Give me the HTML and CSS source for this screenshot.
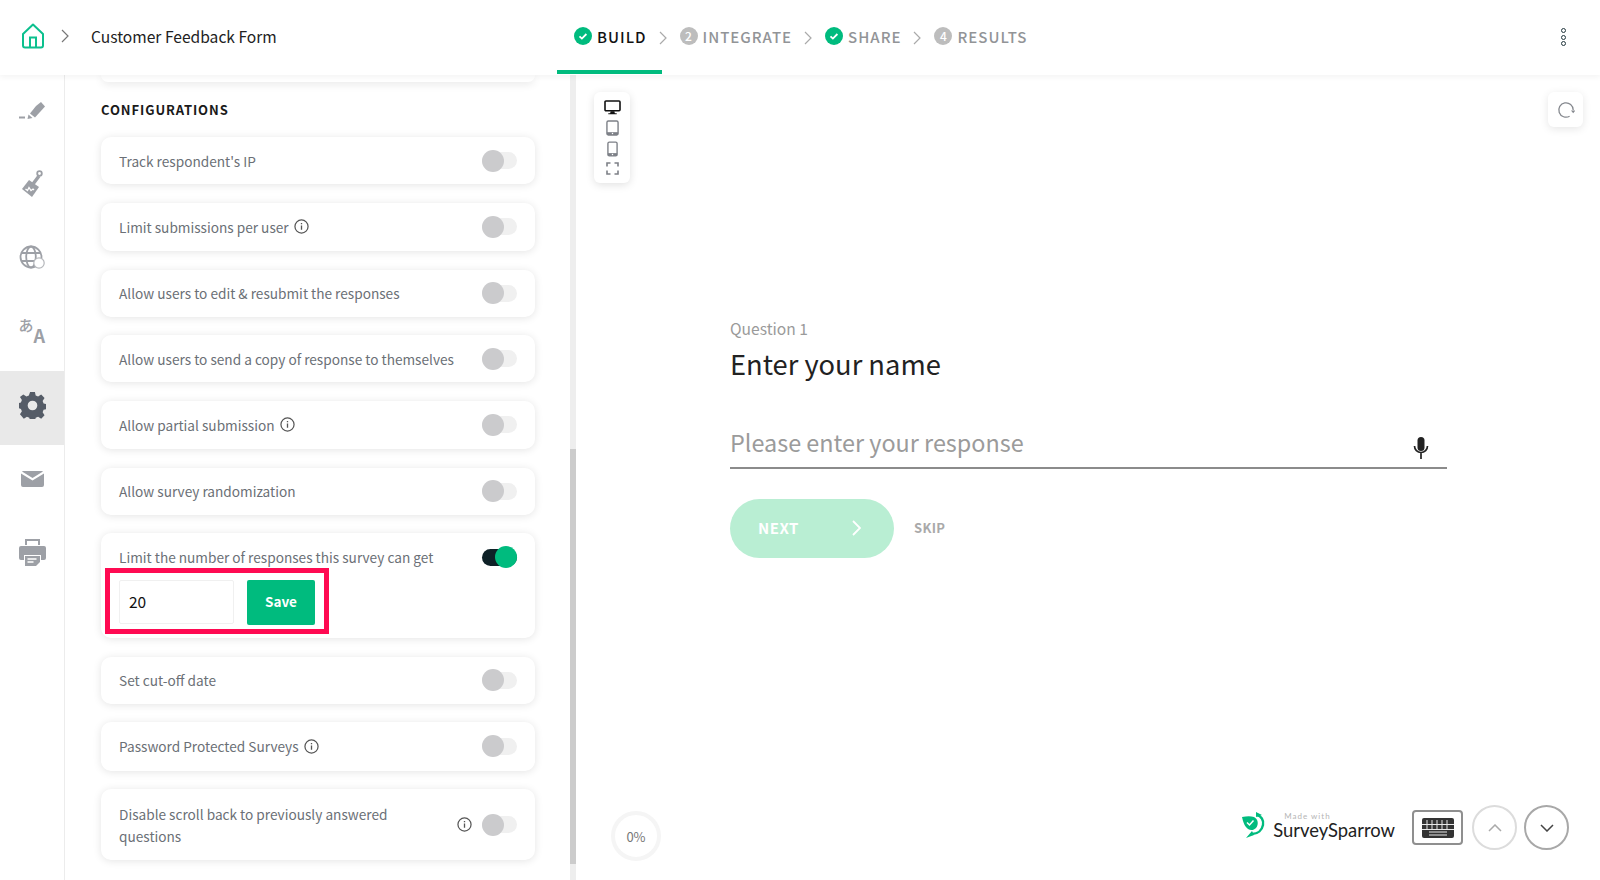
FILE: index.html
```html
<!DOCTYPE html>
<html lang="en">
<head>
<meta charset="utf-8">
<title>Customer Feedback Form</title>
<link rel="stylesheet" href="styles.css">
</head>
<body>
<header class="topbar">
  <div class="crumbs">
    <svg class="home" viewBox="0 0 24 26" width="24" height="26"><path d="M2 11 12 1.500 22 11v11.500a2 2 0 0 1-2 2H4a2 2 0 0 1-2-2z" fill="none" stroke="#0cc08e" stroke-width="2" stroke-linejoin="round"/><path d="M9 24.500V14.500h6v10" fill="none" stroke="#0cc08e" stroke-width="2"/></svg>
    <svg class="chev crumb-chev" viewBox="0 0 8 14" width="8" height="14"><path d="M1 1l6 6-6 6" fill="none" stroke="#777" stroke-width="1.200"/></svg>
    <span class="form-name">Customer Feedback Form</span>
  </div>
  <nav class="steps">
    <div class="step active"><svg class="badge" viewBox="0 0 18 18" width="18" height="18"><circle cx="9" cy="9" r="9" fill="#00bb7e"/><path d="M5.500 9.300l2.400 2.300 4.500-4.600" fill="none" stroke="#fff" stroke-width="1.800"/></svg><span>BUILD</span></div>
    <svg class="chev" viewBox="0 0 8 14" width="8" height="14"><path d="M1 1l6 6-6 6" fill="none" stroke="#aaa" stroke-width="1.200"/></svg>
    <div class="step"><span class="num">2</span><span>INTEGRATE</span></div>
    <svg class="chev" viewBox="0 0 8 14" width="8" height="14"><path d="M1 1l6 6-6 6" fill="none" stroke="#aaa" stroke-width="1.200"/></svg>
    <div class="step"><svg class="badge" viewBox="0 0 18 18" width="18" height="18"><circle cx="9" cy="9" r="9" fill="#00bb7e"/><path d="M5.500 9.300l2.400 2.300 4.500-4.600" fill="none" stroke="#fff" stroke-width="1.800"/></svg><span>SHARE</span></div>
    <svg class="chev" viewBox="0 0 8 14" width="8" height="14"><path d="M1 1l6 6-6 6" fill="none" stroke="#aaa" stroke-width="1.200"/></svg>
    <div class="step"><span class="num">4</span><span>RESULTS</span></div>
  </nav>
  <div class="kebab"><i></i><i></i><i></i></div>
</header>

<main class="layout">
  <aside class="rail">
    <div class="rail-item high"><svg viewBox="0 0 26 18" width="26" height="18"><path d="M17 4 22 0l4 4.500-10 11-5-4z" fill="#9da0a6" transform="translate(0 1)"/><path d="M9.500 13.500l4 3.500-5 1z" fill="#9da0a6"/><rect x="0" y="15.500" width="6" height="2" fill="#9da0a6"/></svg></div>
    <div class="rail-item high"><svg viewBox="0 0 22 27" width="22" height="27"><path d="M8 10 1 19l10 8 7-10z" fill="#9da0a6"/><path d="M4.500 19l2 1.500 1.500-3 2 3 2-1.500 1 1" fill="none" stroke="#fff" stroke-width="1.300"/><path d="M12 14 18 6" stroke="#9da0a6" stroke-width="3.500"/><circle cx="18.500" cy="3.500" r="2.300" fill="none" stroke="#9da0a6" stroke-width="1.800"/></svg></div>
    <div class="rail-item high"><svg viewBox="0 0 26 24" width="26" height="24"><g fill="none" stroke="#9da0a6" stroke-width="1.800"><circle cx="12" cy="12" r="10.500"/><ellipse cx="12" cy="12" rx="4.800" ry="10.500"/><path d="M2 8h20M2 16h20"/></g><circle cx="20" cy="18" r="5.200" fill="#fff" stroke="#b5b7bb" stroke-width="1.200"/></svg></div>
    <div class="rail-item high"><div class="lang"><span class="lang-a">あ</span><span class="lang-b">A</span></div></div>
    <div class="rail-item current"><svg viewBox="0 0 28 28" width="27" height="27"><path fill="#555c67" d="M11.500 0h5l.8 3.700 2.500 1 3.200-2 3.500 3.500-2 3.200 1 2.500 3.500.8v5l-3.500.8-1 2.500 2 3.200-3.500 3.500-3.200-2-2.500 1-.8 3.700h-5l-.8-3.700-2.500-1-3.200 2L1 23.200l2-3.200-1-2.500-3-.8v-5l3-.8 1-2.500-2-3.200L4.500 2.700l3.200 2 2.500-1zM14 9a5 5 0 1 0 0 10 5 5 0 0 0 0-10z"/></svg></div>
    <div class="rail-item"><svg viewBox="0 0 23 16" width="23" height="16"><path fill="#9da0a6" d="M2 0h19a2 2 0 0 1 1 .4L11.500 7 1 .4A2 2 0 0 1 2 0zM0 2.500l11.500 7 11.500-7V14a2 2 0 0 1-2 2H2a2 2 0 0 1-2-2z"/></svg></div>
    <div class="rail-item"><svg viewBox="0 0 27 27" width="27" height="27"><path fill="#9da0a6" d="M6 0h15v6h-2V2H8v4H6z"/><path fill="#9da0a6" d="M2 7h23a2 2 0 0 1 2 2v10a2 2 0 0 1-2 2h-3v-5H5v5H2a2 2 0 0 1-2-2V9a2 2 0 0 1 2-2z"/><path fill="#9da0a6" d="M6 17h15v6l-4 4H6z"/><path d="M8.500 20h9M8.500 23h6" stroke="#fff" stroke-width="1.300"/></svg></div>
  </aside>

  <section class="panel">
    <div class="settings">
      <div class="stub"></div>
      <h2 class="section-title">CONFIGURATIONS</h2>
      <div class="row"><span class="label">Track respondent's IP</span><span class="toggle"></span></div>
      <div class="row tall"><span class="label">Limit submissions per user <svg class="info" viewBox="0 0 16 16" width="15" height="15"><circle cx="8" cy="8" r="7" fill="none" stroke="#555" stroke-width="1.300"/><path d="M8 7v4.500M8 4.300v1.400" stroke="#555" stroke-width="1.400"/></svg></span><span class="toggle"></span></div>
      <div class="row"><span class="label">Allow users to edit &amp; resubmit the responses</span><span class="toggle"></span></div>
      <div class="row"><span class="label">Allow users to send a copy of response to themselves</span><span class="toggle"></span></div>
      <div class="row tall"><span class="label">Allow partial submission <svg class="info" viewBox="0 0 16 16" width="15" height="15"><circle cx="8" cy="8" r="7" fill="none" stroke="#555" stroke-width="1.300"/><path d="M8 7v4.500M8 4.300v1.400" stroke="#555" stroke-width="1.400"/></svg></span><span class="toggle"></span></div>
      <div class="row"><span class="label">Allow survey randomization</span><span class="toggle"></span></div>
      <div class="row-open">
        <div class="open-head"><span class="label">Limit the number of responses this survey can get</span><span class="toggle on"></span></div>
        <div class="limit-form">
          <div class="limit-input">20</div>
          <button class="save">Save</button>
          <span class="highlight"></span>
        </div>
      </div>
      <div class="row"><span class="label">Set cut-off date</span><span class="toggle"></span></div>
      <div class="row tall"><span class="label">Password Protected Surveys <svg class="info" viewBox="0 0 16 16" width="15" height="15"><circle cx="8" cy="8" r="7" fill="none" stroke="#555" stroke-width="1.300"/><path d="M8 7v4.500M8 4.300v1.400" stroke="#555" stroke-width="1.400"/></svg></span><span class="toggle"></span></div>
      <div class="row double"><span class="label wrap">Disable scroll back to previously answered questions</span><svg class="info side" viewBox="0 0 16 16" width="15" height="15"><circle cx="8" cy="8" r="7" fill="none" stroke="#555" stroke-width="1.300"/><path d="M8 7v4.500M8 4.300v1.400" stroke="#555" stroke-width="1.400"/></svg><span class="toggle"></span></div>
    </div>
    <div class="scrollbar"><div class="thumb"></div></div>
  </section>

  <section class="preview">
    <div class="preview-top">
      <div class="devices">
        <svg viewBox="0 0 18 16" width="17" height="15"><rect x="1" y="1" width="16" height="10.500" rx="1" fill="none" stroke="#111" stroke-width="1.700"/><path d="M7 12h4l.5 2h2v1.200h-9V14h2z" fill="#111"/></svg>
        <svg viewBox="0 0 14 17" width="13" height="16"><rect x="1" y="1" width="12" height="15" rx="1.500" fill="none" stroke="#7d8087" stroke-width="1.500"/><rect x="1" y="13" width="12" height="3" fill="#7d8087"/><circle cx="7" cy="14.500" r=".8" fill="#fff"/></svg>
        <svg viewBox="0 0 12 17" width="11" height="16"><rect x="1" y="1" width="10" height="15" rx="1.500" fill="none" stroke="#7d8087" stroke-width="1.500"/><rect x="1" y="13" width="10" height="3" fill="#7d8087"/><circle cx="6" cy="14.500" r=".8" fill="#fff"/></svg>
        <svg viewBox="0 0 13 13" width="13" height="13"><path d="M1 4.500V1h3.500M8.500 1H12v3.500M12 8.500V12H8.500M4.500 12H1V8.500" fill="none" stroke="#7d8087" stroke-width="1.600"/></svg>
      </div>
      <div class="reload"><svg viewBox="0 0 20 20" width="18" height="18"><path d="M14 16.900A8 8 0 1 1 18 10" fill="none" stroke="#85888e" stroke-width="1.400"/><path d="M15.500 10.500h5l-2.500 3z" fill="#85888e"/></svg></div>
    </div>
    <div class="question">
      <div class="q-num">Question 1</div>
      <h1 class="q-title">Enter your name</h1>
      <div class="answer">
        <span class="placeholder">Please enter your response</span>
        <svg class="mic" viewBox="0 0 16 24" width="16" height="24"><rect x="4.500" y="1" width="7" height="14" rx="3.500" fill="#222"/><path d="M1.500 10a6.500 6.500 0 0 0 13 0M8 16.500V23" fill="none" stroke="#222" stroke-width="1.700"/></svg>
      </div>
      <div class="actions">
        <div class="next"><span>NEXT</span><svg viewBox="0 0 9 16" width="9" height="16"><path d="M1 1l7 7-7 7" fill="none" stroke="#fff" stroke-width="1.800"/></svg></div>
        <span class="skip">SKIP</span>
      </div>
    </div>
    <div class="preview-foot">
      <div class="progress">0%</div>
      <div class="brand">
        <svg class="leaf" viewBox="0 0 24 27" width="24" height="27"><path d="M0 5c5-1 9-1 12 0 4 2 5 7 2 11-2 2-5 3-8 1C3 15 1 10 0 5z" fill="#00bb7e"/><path d="M5 10.500l2.500 2.500 4-4.500" fill="none" stroke="#fff" stroke-width="1.500"/><path d="M15 3c4 1 7 5 6 10s-5 9-11 9" fill="none" stroke="#00bb7e" stroke-width="2.400"/><path d="M14 0l6 3-6 2zM10 19l-6 7 8-3z" fill="#00bb7e"/></svg>
        <div class="brand-text"><small>Made with</small><b>SurveySparrow</b></div>
      </div>
      <div class="keys"><svg viewBox="0 0 32 20" width="32" height="20"><rect width="32" height="20" rx="2" fill="#333"/><path d="M0 6.500h32M0 11.500h32M7 14h18M7 17h18" stroke="#e8e8e8" stroke-width="1"/><path d="M5 2v9M10 2v9M15 2v9M20 2v9M25 2v9" stroke="#e8e8e8" stroke-width="1"/></svg></div>
      <div class="round up"><svg viewBox="0 0 14 8" width="14" height="8"><path d="M1 7l6-6 6 6" fill="none" stroke="#aaa" stroke-width="1.500"/></svg></div>
      <div class="round down"><svg viewBox="0 0 14 8" width="14" height="8"><path d="M1 1l6 6 6-6" fill="none" stroke="#444" stroke-width="1.500"/></svg></div>
    </div>
  </section>
</main>
</body>
</html>
```
FILE: styles.css
```css
* { box-sizing: border-box; }
html, body { margin: 0; height: 100%; }
body {
  width: 1600px; height: 880px; overflow: hidden; background: #fff;
  font-family: "Noto Sans CJK SC", "Noto Sans", sans-serif; color: #222;
  display: flex; flex-direction: column;
}
svg { display: block; flex: none; }

.topbar {
  height: 75px; flex: none; display: flex; align-items: center; background: #fff;
  position: relative; z-index: 3; box-shadow: 0 2px 6px rgba(0,0,0,.05);
}
.crumbs { width: 574px; flex: none; display: flex; align-items: center; padding-left: 21px; padding-bottom: 3px; }
.crumb-chev { margin-left: 16px; }
.form-name { margin-left: 22px; font-size: 15.600px; line-height: 24px; color: #222; }
.steps { display: flex; align-items: center; }
.step { display: flex; align-items: center; gap: 5px; position: relative; height: 75px; padding-bottom: 3px; font-size: 15px; font-weight: 500; letter-spacing: 1px; color: #929497; }
.step.active { color: #111; }
.step.active::after { content: ""; position: absolute; left: -17px; right: -15px; bottom: 1px; height: 4px; background: #00bb7e; }
.steps > .chev { margin: 0 13px 0 12px; }
.num { width: 18px; height: 18px; border-radius: 50%; background: #bdbdbd; color: #fff; font-size: 12px; line-height: 18px; text-align: center; letter-spacing: 0; }
.kebab { margin-left: auto; margin-right: 34px; display: flex; flex-direction: column; gap: 1.500px; margin-bottom: 1px; }
.kebab i { width: 5px; height: 5px; border-radius: 50%; border: 1.500px solid #24383f; display: block; }

.layout { flex: 1; display: flex; min-height: 0; }
.rail { width: 65px; flex: none; border-right: 1px solid #ececec; padding-top: 2px; }
.rail-item { height: 73.500px; display: flex; align-items: center; justify-content: center; padding-bottom: 4px; }
.rail-item.high { padding-bottom: 8px; }
.rail-item.current { background: #e9e9e9; padding-bottom: 5px; }
.lang { width: 27px; height: 26px; display: flex; align-items: flex-start; color: #9da0a6; }
.lang-a { font-size: 15px; line-height: 15px; font-weight: 500; }
.lang-b { font-size: 18px; line-height: 18px; font-weight: 700; margin-top: 9px; }

.panel { width: 511px; flex: none; display: flex; background: #fff; }
.settings { width: 505px; flex: none; padding: 0 35px 0 36px; }
.stub { height: 7px; background: #fff; border-radius: 0 0 10px 10px; box-shadow: 0 2px 8px rgba(0,0,0,.1); }
.section-title { margin: 19px 0 18px; font-size: 13px; line-height: 18px; font-weight: 700; letter-spacing: .9px; color: #1a1a1a; }
.row, .row-open { background: #fff; border-radius: 10px; box-shadow: 0 1px 8px rgba(0,0,0,.11); margin-bottom: 18.500px; }
.row { height: 47px; display: flex; align-items: center; padding: 0 18px; }
.row.tall { height: 48.500px; }
.row.double { height: 71px; }
.row-open { height: 105px; padding: 12px 18px 0; position: relative; }
.open-head { display: flex; align-items: center; justify-content: space-between; height: 24px; }
.label { font-size: 13.650px; line-height: 22px; color: #6b7076; display: flex; align-items: center; gap: 5px; flex: 1; white-space: nowrap; }
.label.wrap { white-space: normal; display: block; padding-right: 20px; }
.info.side { margin-right: 10px; }
.toggle { width: 35px; height: 17px; background: #f0f0f0; border-radius: 9px; position: relative; flex: none; }
.toggle::after { content: ""; position: absolute; left: 0; top: -2.500px; width: 22px; height: 22px; border-radius: 50%; background: #cbcbcd; }
.toggle.on { background: #0e2127; }
.toggle.on::after { left: 13px; background: #00bb7e; }

.limit-form { display: flex; gap: 13px; margin-top: 11px; position: relative; }
.limit-input { width: 115px; height: 44px; border: 1px solid #f0f0f0; border-radius: 2px; padding-left: 9px; font-size: 15.500px; line-height: 40px; color: #111; }
.save { width: 68px; height: 45px; border: 0; background: #00bb7e; border-radius: 2px; color: #fff; font: 600 13.500px/43px "Noto Sans CJK SC", "Noto Sans", sans-serif; padding: 0 0 2px; }
.highlight { position: absolute; left: -14px; top: -12px; width: 224px; height: 66px; border: 5px solid #ff0a52; }

.scrollbar { width: 6px; background: #eeeeee; flex: none; display: flex; flex-direction: column; justify-content: flex-end; padding-bottom: 16px; }
.thumb { height: 415px; background: #cccccc; }

.preview { flex: 1; display: flex; flex-direction: column; min-width: 0; }
.preview-top { display: flex; justify-content: space-between; align-items: flex-start; padding: 17px 17px 0 18px; height: 241px; flex: none; }
.devices { width: 36px; height: 91px; background: #fff; border-radius: 6px; box-shadow: 0 2px 8px rgba(0,0,0,.12); display: flex; flex-direction: column; align-items: center; justify-content: space-between; padding: 8px 0 8px; }
.reload { width: 35px; height: 35px; background: #fff; border-radius: 6px; box-shadow: 0 2px 8px rgba(0,0,0,.1); display: flex; align-items: center; justify-content: center; }
.question { margin-left: 154px; width: 717px; flex: none; }
.q-num { font-size: 15.600px; line-height: 24px; color: #9a9a9a; }
.q-title { margin: 2px 0 0; font-size: 27.300px; line-height: 42px; font-weight: 400; color: #222; }
.answer { margin-top: 34px; height: 51px; border-bottom: 2px solid #8b8b8b; display: flex; align-items: center; justify-content: space-between; padding-right: 18px; }
.placeholder { font-size: 23.400px; line-height: 40px; color: #9b9b9b; margin-bottom: 2px; }
.mic { margin-top: 11px; }
.actions { display: flex; align-items: center; margin-top: 30px; }
.next { width: 164px; height: 59px; border-radius: 30px; background: #b9eed3; display: flex; align-items: center; justify-content: space-between; padding: 0 33px 2px 28px; color: #fff; font-size: 15px; font-weight: 700; letter-spacing: .5px; }
.skip { margin-left: 20px; font-size: 13px; font-weight: 600; color: #a9a9a9; letter-spacing: .3px; margin-bottom: 2px; }

.preview-foot { margin-top: auto; height: 80px; display: flex; align-items: flex-start; padding-left: 35px; padding-top: 10px; }
.progress { width: 50px; height: 50px; border-radius: 50%; border: 4px solid #f5f5f5; margin-top: 1px; display: flex; align-items: center; justify-content: center; font-size: 13px; color: #777; }
.brand { margin-left: auto; display: flex; align-items: center; gap: 7px; margin-top: 0; height: 30px; }
.brand-text { display: flex; flex-direction: column; font-family: Lato, Roboto, sans-serif; }
.brand-text small { font-size: 8px; line-height: 9px; letter-spacing: 1px; color: #b5b5b5; margin-left: 11px; margin-top: 2px; }
.brand-text b { font-size: 18.400px; line-height: 19px; font-weight: 400; color: #222; }
.keys { width: 51px; height: 35px; border: 2px solid #8f8f8f; border-radius: 4px; margin-left: 17px; display: flex; align-items: center; justify-content: center; }
.round { width: 45px; height: 45px; border-radius: 50%; background: #fff; display: flex; align-items: center; justify-content: center; margin-top: -5px; }
.round.up { border: 2px solid #dcdcdc; margin-left: 9px; }
.round.down { border: 2px solid #a8a8a8; margin-left: 7px; margin-right: 31px; }
```
